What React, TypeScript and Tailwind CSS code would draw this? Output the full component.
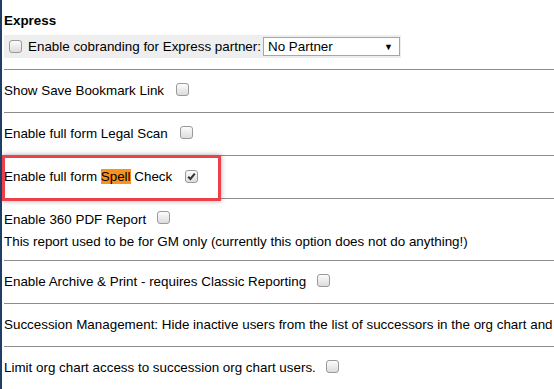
import React from 'react';

const Box = ({ checked }: { checked?: boolean }) => (
  <span className="inline-flex w-[13px] h-[13px] shrink-0 items-center justify-center rounded-[3px] border border-[#9a9a9a] bg-gradient-to-b from-[#fcfcfc] to-[#dcdcdc]">
    {checked && (
      <svg width="9" height="9" viewBox="0 0 9 9">
        <path d="M1.2 4.8 L3.4 7 L7.8 1.6" fill="none" stroke="#333" strokeWidth="2" />
      </svg>
    )}
  </span>
);

const Line = () => <div className="h-px bg-[#8c8c8c]" />;

const Row = ({ children, gap = 'ml-[12px]', checked }: { children: React.ReactNode; gap?: string; checked?: boolean }) => (
  <div className="flex h-[42px] items-center whitespace-nowrap">
    <span>{children}</span>
    <span className={gap}>
      <Box checked={checked} />
    </span>
  </div>
);

export default function App() {
  return (
    <div
      className="relative h-[389px] w-[554px] overflow-hidden border-l-2 border-[#1d3e66] bg-white pl-[2px] text-[13.4px] leading-[16px] text-black"
      style={{ fontFamily: '"Liberation Sans", Arial, sans-serif' }}
    >
      {/* Express section */}
      <div className="pt-[13px] font-bold">Express</div>
      <div className="mt-[6px] flex h-[23px] w-fit items-center bg-[#eeeeee] pl-[5px] pr-[1px]">
        <Box />
        <span className="ml-[6px]">Enable cobranding for Express partner:</span>
        <div className="ml-[2px] flex h-[19px] w-[137px] items-center justify-between border border-[#a6a6a6] bg-white pl-[4px] pr-[6px]">
          <span>No Partner</span>
          <span className="text-[9px]">▼</span>
        </div>
      </div>
      <div className="mt-[11px]">
        <Line />
      </div>

      <Row>Show Save Bookmark Link</Row>
      <Line />
      <Row>Enable full form Legal Scan</Row>
      <Line />
      <Row gap="ml-[13px]" checked>
        Enable full form <span className="bg-[#f7931e]">Spell</span> Check
      </Row>
      <Line />

      {/* 360 report */}
      <div className="flex h-[61px] flex-col whitespace-nowrap pt-[12px]">
        <div className="flex items-center">
          <span>Enable 360 PDF Report</span>
          <span className="ml-[11px]">
            <Box />
          </span>
        </div>
        <div className="mt-[6px]">This report used to be for GM only (currently this option does not do anything!)</div>
      </div>
      <Line />

      <Row gap="ml-[11px]">Enable Archive &amp; Print - requires Classic Reporting</Row>
      <Line />
      <div className="flex h-[42px] items-center whitespace-nowrap">
        Succession Management: Hide inactive users from the list of successors in the org chart and exclude them
      </div>
      <Line />
      <Row gap="ml-[10px]">Limit org chart access to succession org chart users.</Row>

      {/* highlight annotation */}
      <div className="absolute left-0 top-[155px] h-[46px] w-[219px] border-[3px] border-[#eb4249] shadow-[0_0_5px_rgba(0,0,0,0.35)]" />
    </div>
  );
}
